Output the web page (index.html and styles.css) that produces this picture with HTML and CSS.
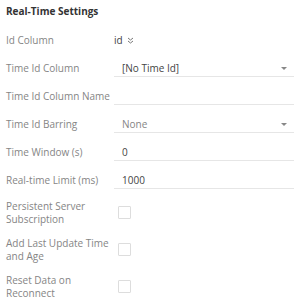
FILE: index.html
```html
<!DOCTYPE html>
<html lang="en">
<head>
  <meta charset="UTF-8">
  <title>Real-Time Settings</title>
  <link rel="stylesheet" href="styles.css">
</head>
<body>
  <div class="panel">
    <div class="panel-title">Real-Time Settings</div>

    <div class="row">
      <div class="label">Id Column</div>
      <div class="value plain">id
        <svg class="chevrons" width="7" height="7" viewBox="0 0 7 7"><path d="M1 1l2.5 2 2.5-2M1 4l2.5 2 2.5-2" fill="none" stroke="#777" stroke-width="1"/></svg>
      </div>
    </div>
    <div class="row">
      <div class="label">Time Id Column</div>
      <div class="value field select"><span>[No Time Id]</span><span class="caret"></span></div>
    </div>
    <div class="row">
      <div class="label">Time Id Column Name</div>
      <div class="value field"></div>
    </div>
    <div class="row">
      <div class="label">Time Id Barring</div>
      <div class="value field select muted"><span>None</span><span class="caret"></span></div>
    </div>
    <div class="row">
      <div class="label">Time Window (s)</div>
      <div class="value field"><span>0</span></div>
    </div>
    <div class="row">
      <div class="label">Real-time Limit (ms)</div>
      <div class="value field"><span>1000</span></div>
    </div>

    <div class="row tall">
      <div class="label">Persistent Server Subscription</div>
      <div class="value"><span class="checkbox"></span></div>
    </div>
    <div class="row tall">
      <div class="label">Add Last Update Time and Age</div>
      <div class="value"><span class="checkbox"></span></div>
    </div>
    <div class="row tall">
      <div class="label">Reset Data on Reconnect</div>
      <div class="value"><span class="checkbox"></span></div>
    </div>
  </div>
</body>
</html>
```

FILE: styles.css
```css
body {
  font-family: "Open Sans", "Noto Sans", Arial, sans-serif;
  font-size: 10px;
  background: #fff;
  margin: 0;
  padding: 0;
}
.panel {
  padding: 4px 9px 0 6px;
}
.panel-title {
  font-weight: bold;
  color: #333;
  line-height: 15px;
  margin-bottom: 7px;
}
.row {
  display: grid;
  grid-template-columns: 108px 1fr;
  align-items: center;
  height: 28px;
}
.row.tall {
  height: 37px;
}
.label {
  color: #858585;
  line-height: 13px;
  padding-top: 1px;
}
.value {
  color: #444;
  display: flex;
  align-items: center;
}
.value.plain {
  gap: 4px;
}
.chevrons {
  margin-top: 1px;
}
.field {
  align-self: start;
  height: 16px;
  margin-top: 6px;
  padding: 0 7px 0 8px;
  border-bottom: 1px solid #e6e6e6;
  justify-content: space-between;
  line-height: 16px;
}
.field.muted {
  color: #858585;
}
.caret {
  width: 0;
  height: 0;
  border-left: 3px solid transparent;
  border-right: 3px solid transparent;
  border-top: 3px solid #888;
}
.checkbox {
  display: block;
  width: 11px;
  height: 11px;
  margin-left: 4px;
  border: 1px solid #ddd;
  border-radius: 1px;
}
```
